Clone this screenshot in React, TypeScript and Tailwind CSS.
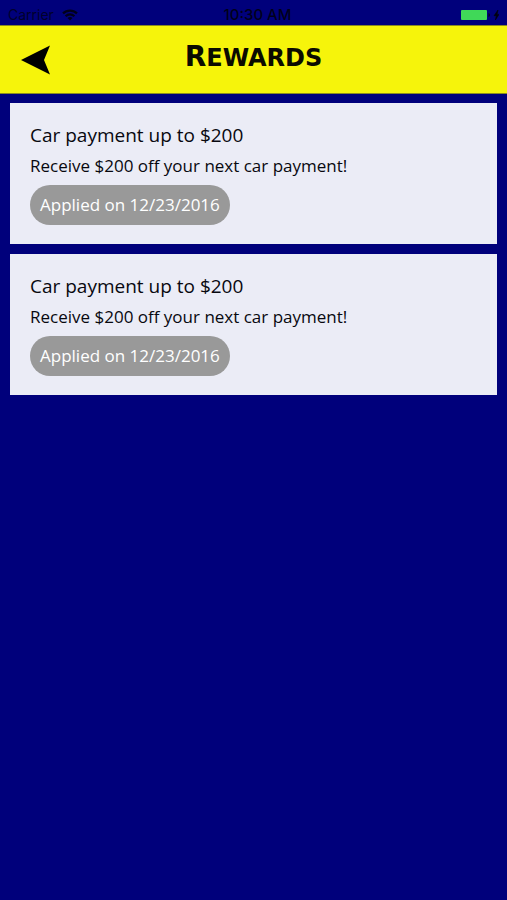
interface Reward {
  id: number
  title: string
  description: string
  appliedOn: string
}

const rewards: Reward[] = [
  {
    id: 1,
    title: 'Car payment up to $200',
    description: 'Receive $200 off your next car payment!',
    appliedOn: '12/23/2016',
  },
  {
    id: 2,
    title: 'Car payment up to $200',
    description: 'Receive $200 off your next car payment!',
    appliedOn: '12/23/2016',
  },
]

function StatusBar() {
  return (
    <div className="grid h-[25px] grid-cols-3 items-center px-2 pt-1 font-['Inter',sans-serif] text-sm leading-5 text-[#00001a]">
      <div className="flex items-center gap-2">
        <span className="text-[#00002c]">Carrier</span>
        <svg viewBox="0 0 16 12" className="h-3 w-4" fill="none" stroke="#00001a" strokeWidth="2.2" aria-hidden="true">
          <path d="M1 4.4a10 10 0 0 1 14 0M3.6 7.2a6.2 6.2 0 0 1 8.8 0" />
          <path d="M8 11.6 5.5 9.1a3.6 3.6 0 0 1 5 0z" fill="#00001a" stroke="none" />
        </svg>
      </div>
      <span className="pl-2 text-center text-[15px] font-medium">10:30 AM</span>
      <div className="flex justify-end">
        <svg viewBox="0 0 40 12" className="h-3 w-10" aria-hidden="true">
          <rect x="2" y="1" width="26" height="10" rx="1" fill="#40d858" />
          <path d="M29.5 4v4q1.5-.6 1.5-2t-1.5-2z" fill="#00001a" />
          <path d="M39 1 35 6.7h2.3L36.4 11l3.6-5.6h-2z" fill="#00000c" stroke="#00000c" strokeWidth=".6" />
        </svg>
      </div>
    </div>
  )
}

function Header() {
  return (
    <header className="grid h-[69px] grid-cols-[1fr_auto_1fr] items-center border-y border-[#8a8a20] bg-[#f6f40b] px-5">
      <button type="button" aria-label="Back" className="h-8 w-8 cursor-pointer">
        <svg viewBox="0 0 32 32" className="h-8 w-8" aria-hidden="true">
          <path d="M1 16 30 1.5 24 16 30 30.5z" fill="#000" />
        </svg>
      </button>
      <h1 className="pb-1 font-['DejaVu_Sans',sans-serif] text-2xl leading-9 font-bold text-[#0b0b00] uppercase first-letter:text-[28px]">
        Rewards
      </h1>
    </header>
  )
}

function RewardCard({ reward }: { reward: Reward }) {
  return (
    <li className="bg-[#ebecf6] px-5 pt-[18px] pb-[19px]">
      <h2 className="text-[19px] leading-7">{reward.title}</h2>
      <p className="mt-[5px] text-[17px] leading-6">{reward.description}</p>
      <span className="mt-[7px] flex h-10 w-fit items-center rounded-full bg-[#999] px-[10px] text-[17px] text-white">
        Applied on {reward.appliedOn}
      </span>
    </li>
  )
}

export default function App() {
  return (
    <div className="min-h-screen bg-[#00007b] font-['Open_Sans',sans-serif] text-[#08080f]">
      <StatusBar />
      <Header />
      <main className="px-[10px] pt-[9px]">
        <ul className="flex flex-col gap-[10px]">
          {rewards.map((reward) => (
            <RewardCard key={reward.id} reward={reward} />
          ))}
        </ul>
      </main>
    </div>
  )
}
